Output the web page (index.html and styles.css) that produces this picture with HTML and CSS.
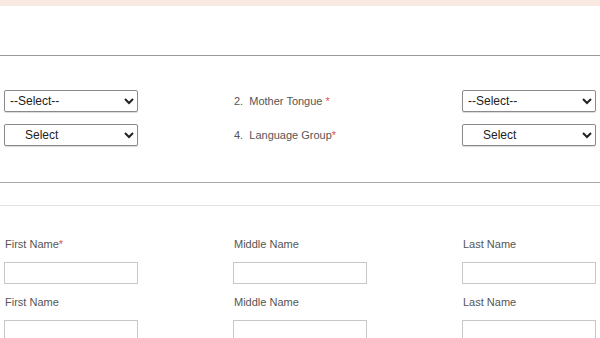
FILE: index.html
```html
<!DOCTYPE html>
<html lang="en">
<head>
    <meta charset="UTF-8">
    <title>Personal Details</title>
    <link rel="stylesheet" href="styles.css">
</head>
<body>
    <div class="topbar"></div>
    <div class="section-head"></div>

    <div class="lang-grid">
        <select class="pick">
            <option>--Select--</option>
        </select>
        <label class="field-label">2.&nbsp;&nbsp;Mother Tongue <span class="req">*</span></label>
        <select class="pick">
            <option>--Select--</option>
        </select>

        <select class="pick pad">
            <option>Select</option>
        </select>
        <label class="field-label">4.&nbsp;&nbsp;Language Group<span class="req">*</span></label>
        <select class="pick pad">
            <option>Select</option>
        </select>
    </div>

    <hr class="rule">
    <hr class="rule light">

    <div class="name-grid">
        <div class="field">
            <label class="field-label">First Name<span class="req">*</span></label>
            <input type="text" class="box">
        </div>
        <div class="field">
            <label class="field-label">Middle Name</label>
            <input type="text" class="box">
        </div>
        <div class="field">
            <label class="field-label">Last Name</label>
            <input type="text" class="box">
        </div>
        <div class="field">
            <label class="field-label">First Name</label>
            <input type="text" class="box">
        </div>
        <div class="field">
            <label class="field-label">Middle Name</label>
            <input type="text" class="box">
        </div>
        <div class="field">
            <label class="field-label">Last Name</label>
            <input type="text" class="box">
        </div>
    </div>
</body>
</html>
```

FILE: styles.css
```css
body {
    font-family: Arial, "Liberation Sans", sans-serif;
    background-color: #fff;
    margin: 0;
    padding: 0;
    overflow: hidden;
}
.topbar {
    height: 6px;
    background-color: #f8e9e1;
}
.section-head {
    height: 49px;
    border-bottom: 1px solid #999;
}
.lang-grid {
    display: grid;
    grid-template-columns: 229px 229px 1fr;
    row-gap: 12px;
    align-items: center;
    padding: 34px 0 0 4px;
}
.pick {
    width: 134px;
    height: 22px;
    font-family: Arial, "Liberation Sans", sans-serif;
    font-size: 12px;
    color: #222;
    background-color: #fff;
    border: 1px solid #8a8a8a;
    border-radius: 2px;
    box-shadow: 0 1px 1px rgba(0,0,0,0.15);
    padding: 0 0 0 1px;
}
.pick.pad {
    padding-left: 16px;
}
.field-label {
    font-size: 11px;
    color: #555;
    line-height: 13px;
}
.req {
    color: #d9534f;
}
.rule {
    margin: 36px 0 0 0;
    border: none;
    border-top: 1px solid #a8a8a8;
    height: 0;
}
.rule.light {
    margin-top: 22px;
    border-top-color: #e3e3e3;
}
.name-grid {
    display: grid;
    grid-template-columns: 229px 229px 1fr;
    row-gap: 12px;
    padding: 32px 0 0 4px;
}
.field {
    display: flex;
    flex-direction: column;
    gap: 11px;
}
.field-label {
    padding-left: 1px;
}
.box {
    width: 134px;
    height: 22px;
    box-sizing: border-box;
    border: 1px solid #c8c8c8;
    margin: 0;
    padding: 2px 4px;
}
```
